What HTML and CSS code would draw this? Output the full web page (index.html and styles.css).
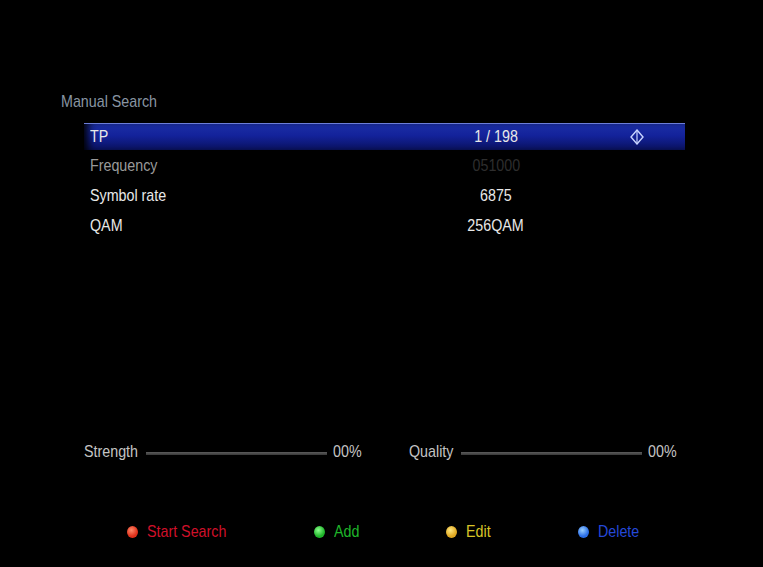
FILE: index.html
```html
<!doctype html>
<html lang="en">
  <head>
    <meta charset="UTF-8" />
    <title>Manual Search</title>
    <link rel="stylesheet" href="styles.css">
  </head>
  <body>
    <div class="screen">
      <h1 class="title"><span class="nar">Manual Search</span></h1>

      <div class="list">
        <div class="row active">
          <span class="label"><span class="nar">TP</span></span>
          <span class="value"><span class="nar mid">1 / 198</span></span>
          <span class="arrows">
            <svg width="14" height="16" viewBox="0 0 14 16">
              <path d="M7 1 L13 8 L7 15 L1 8 Z" fill="none" stroke="#c8d4ff" stroke-width="1.4" />
              <path d="M7 1 V15" stroke="#c8d4ff" stroke-width="1.2" />
            </svg>
          </span>
        </div>
        <div class="row disabled">
          <span class="label"><span class="nar">Frequency</span></span>
          <span class="value"><span class="nar mid">051000</span></span>
        </div>
        <div class="row">
          <span class="label"><span class="nar">Symbol rate</span></span>
          <span class="value"><span class="nar mid">6875</span></span>
        </div>
        <div class="row">
          <span class="label"><span class="nar">QAM</span></span>
          <span class="value"><span class="nar mid">256QAM</span></span>
        </div>
      </div>

      <div class="signal">
        <div class="meter strength">
          <span class="meter-name"><span class="nar">Strength</span></span>
          <span class="meter-bar"></span>
          <span class="meter-val"><span class="nar">00%</span></span>
        </div>
        <div class="meter quality">
          <span class="meter-name"><span class="nar">Quality</span></span>
          <span class="meter-bar"></span>
          <span class="meter-val"><span class="nar">00%</span></span>
        </div>
      </div>

      <div class="keys">
        <span class="key red"><i class="dot"></i><span class="nar">Start Search</span></span>
        <span class="key green"><i class="dot"></i><span class="nar">Add</span></span>
        <span class="key yellow"><i class="dot"></i><span class="nar">Edit</span></span>
        <span class="key blue"><i class="dot"></i><span class="nar">Delete</span></span>
      </div>
    </div>
  </body>
</html>
```

FILE: styles.css
```css
html, body {
  margin: 0;
  background: #000;
}
body {
  font-family: 'Liberation Sans', Arial, sans-serif;
  font-size: 17px;
  color: #e8e8e8;
}
/* the set-top box font is a narrow grotesk: squeeze Liberation Sans */
.nar {
  display: inline-block;
  white-space: nowrap;
  transform: scaleX(0.84);
  transform-origin: left center;
}
.nar.mid {
  transform-origin: center center;
}
.screen {
  width: 763px;
  height: 567px;
  padding-top: 91px;
  box-sizing: border-box;
  display: flex;
  flex-direction: column;
}
.title {
  margin: 0 0 0 61px;
  font-size: 17px;
  font-weight: normal;
  color: #8895a3;
  line-height: 22px;
}
.list {
  margin: 10px 0 0 84px;
  width: 601px;
}
.row {
  display: flex;
  align-items: center;
  height: 30px;
}
.row.active {
  height: 26px;
  margin-bottom: 1px;
  border-top: 1px solid #6c7ed8;
  background: linear-gradient(to bottom, #1c2fa6 0%, #13229a 45%, #0a1260 100%);
  box-shadow: inset 8px 0 8px -4px #000;
}
.label {
  padding-left: 6px;
  width: 323px;
}
.value {
  width: 166px;
  text-align: center;
}
.arrows {
  margin-left: 51px;
  display: flex;
}
.row.disabled .label { color: #9a9a9a; }
.row.disabled .value { color: #2e2e2e; }

.signal {
  margin: 201px 0 0 84px;
  display: flex;
}
.meter {
  display: flex;
  align-items: center;
  color: #c4c4c4;
}
.strength .meter-name { width: 62px; }
.quality { margin-left: 48px; }
.quality .meter-name { width: 52px; }
.meter-bar {
  width: 181px;
  height: 3px;
  margin-top: 2px;
  background: linear-gradient(to bottom, #5c5c5c, #383838);
}
.meter-val {
  margin-left: 6px;
  width: 28px;
}

.keys {
  margin: 60px 0 0 127px;
  display: flex;
}
.key {
  display: flex;
  align-items: center;
  gap: 9px;
}
.dot {
  width: 11px;
  height: 12px;
  border-radius: 50%;
}
.red { color: #d0102a; width: 187px; }
.red .dot { background: radial-gradient(circle at 40% 35%, #ff8a6a, #e0301a 60%); }
.green { color: #1fb52a; width: 132px; }
.green .dot { background: radial-gradient(circle at 40% 35%, #8cff8c, #1fb52a 60%); }
.yellow { color: #d8c427; width: 132px; }
.yellow .dot { background: radial-gradient(circle at 40% 35%, #ffe880, #e0a820 60%); }
.blue { color: #2548d8; }
.blue .dot { background: radial-gradient(circle at 40% 35%, #9ad0ff, #2a6ee8 60%); }
```
